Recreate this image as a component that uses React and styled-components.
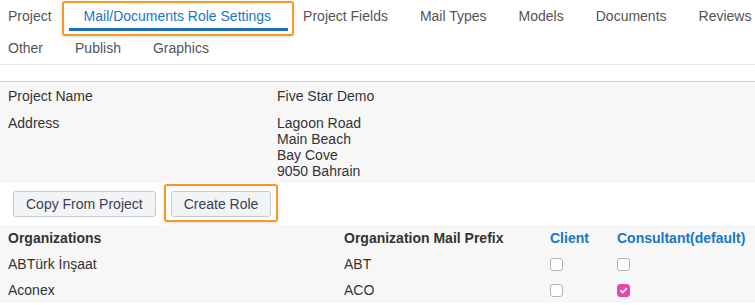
import React from 'react';
import styled, { createGlobalStyle, css } from 'styled-components';

const GlobalStyle = createGlobalStyle`
  body {
    margin: 0;
    background: #fff;
    font-family: "Liberation Sans", Arial, Helvetica, sans-serif;
    font-size: 14px;
    color: #333;
  }
`;

const highlight = css`
  &::before {
    content: '';
    position: absolute;
    border: 2px solid #f39a2b;
    border-radius: 3px;
    box-shadow: 0 1px 3px rgba(0, 0, 0, 0.15);
    pointer-events: none;
  }
`;

const Tabs = styled.ul`
  display: flex;
  flex-wrap: wrap;
  column-gap: 32px;
  list-style: none;
  margin: 0;
  padding: 0 0 0 8px;
  border-bottom: 1px solid #e6e6e6;
`;

const Tab = styled.li`
  position: relative;
  line-height: 32px;
  white-space: nowrap;
  color: ${(p) => (p.$active ? '#1a77c4' : '#555')};

  ${(p) =>
    p.$active &&
    css`
      ${highlight}
      &::before {
        left: -22px;
        right: -23px;
        top: 1px;
        bottom: -4px;
      }

      &::after {
        content: '';
        position: absolute;
        left: -15px;
        right: -17px;
        bottom: 1px;
        height: 3px;
        background: #1a6fb8;
      }
    `}
`;

const InfoPanel = styled.div`
  margin-top: 16px;
  border-top: 1px solid #d2d2d2;
  background: #f7f7f7;
  display: grid;
  grid-template-columns: 269px 1fr;
  row-gap: 11px;
  padding: 6px 8px 4px;
  line-height: 16px;
`;

const Value = styled.div`
  white-space: pre-line;
`;

const Toolbar = styled.div`
  display: flex;
  gap: 15px;
  padding: 8px 0 8px 13px;
`;

const Highlighted = styled.span`
  position: relative;
  display: inline-flex;
  ${highlight}
  &::before {
    inset: -7px -7px -5px -7px;
  }
`;

const Button = styled.button`
  height: 26px;
  padding: 0 12px;
  border: 1px solid #c6cbd2;
  border-radius: 3px;
  background: #f3f4f6;
  color: #3b4250;
  font-family: inherit;
  font-size: 14px;
  cursor: pointer;
`;

const Table = styled.div`
  background: #f7f7f7;
  display: grid;
  grid-template-columns: 336px 206px 67px 1fr;
  grid-auto-rows: 26px;
  padding-left: 8px;
`;

const Cell = styled.div`
  display: flex;
  align-items: center;
  white-space: nowrap;
`;

const HeadCell = styled(Cell)`
  font-weight: 700;
  color: ${(p) => (p.$role ? '#1a77c4' : '#333')};
`;

const Check = styled.span`
  width: 13px;
  height: 13px;
  box-sizing: border-box;
  border-radius: 3px;
  display: inline-flex;
  align-items: center;
  justify-content: center;
  background: ${(p) => (p.$checked ? '#e54aa8' : '#fff')};
  border: 1px solid ${(p) => (p.$checked ? '#e54aa8' : '#b3b3b3')};
`;

const tabs = [
  'Project',
  'Mail/Documents Role Settings',
  'Project Fields',
  'Mail Types',
  'Models',
  'Documents',
  'Reviews',
  'Other',
  'Publish',
  'Graphics',
];

const orgs = [
  { name: 'ABTürk İnşaat', prefix: 'ABT', client: false, consultant: false },
  { name: 'Aconex', prefix: 'ACO', client: false, consultant: true },
];

const Checkbox = ({ checked }) => (
  <Check $checked={checked}>
    {checked && (
      <svg width='9' height='9' viewBox='0 0 10 10'>
        <path d='M2 5.3 4.1 7.4 8.2 2.8' fill='none' stroke='#fff' strokeWidth='1.8' strokeLinecap='round' strokeLinejoin='round' />
      </svg>
    )}
  </Check>
);

const App = () => {
  return (
    <>
      <GlobalStyle />
      <Tabs>
        {tabs.map((t) => (
          <Tab key={t} $active={t === 'Mail/Documents Role Settings'}>
            {t}
          </Tab>
        ))}
      </Tabs>
      <InfoPanel>
        <div>Project Name</div>
        <Value>Five Star Demo</Value>
        <div>Address</div>
        <Value>{'Lagoon Road\nMain Beach\nBay Cove\n9050 Bahrain'}</Value>
      </InfoPanel>
      <Toolbar>
        <Button>Copy From Project</Button>
        <Highlighted>
          <Button>Create Role</Button>
        </Highlighted>
      </Toolbar>
      <Table>
        <HeadCell>Organizations</HeadCell>
        <HeadCell>Organization Mail Prefix</HeadCell>
        <HeadCell $role>Client</HeadCell>
        <HeadCell $role>Consultant(default)</HeadCell>
        {orgs.map((o) => (
          <React.Fragment key={o.prefix}>
            <Cell>{o.name}</Cell>
            <Cell>{o.prefix}</Cell>
            <Cell>
              <Checkbox checked={o.client} />
            </Cell>
            <Cell>
              <Checkbox checked={o.consultant} />
            </Cell>
          </React.Fragment>
        ))}
      </Table>
    </>
  );
};

export default App;
